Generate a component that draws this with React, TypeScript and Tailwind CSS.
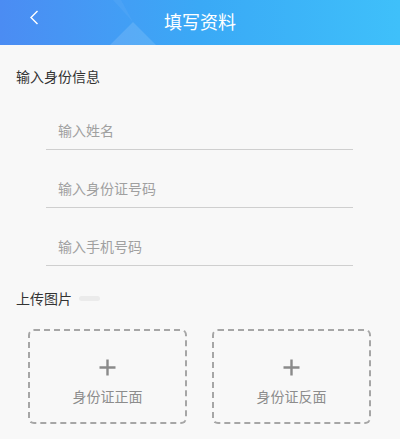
import React from "react";

const font = { fontFamily: '"Noto Sans CJK SC", "Noto Sans", sans-serif' };

function Field({ placeholder }: { placeholder: string }) {
  return (
    <div className="ml-[46px] w-[307px] h-[58px] border-b border-[#cfcfcf] flex items-end pb-[9px] pl-[12px]">
      <span className="text-[14px] leading-[20px] text-[#a0a0a0]">{placeholder}</span>
    </div>
  );
}

function UploadBox({ label }: { label: string }) {
  return (
    <div className="w-[159px] h-[95px] rounded-[6px] border-2 border-dashed border-[#a6a6a6] flex flex-col items-center pt-[28px]">
      <svg width="17" height="17" viewBox="0 0 17 17">
        <path d="M8.5 0.5V16.5M0.5 8.5H16.5" stroke="#8a8a8a" strokeWidth="2.4" />
      </svg>
      <span className="mt-[10px] text-[14px] leading-[20px] text-[#8c8c8c]">{label}</span>
    </div>
  );
}

export default function App() {
  return (
    <div className="w-[400px] h-[439px] bg-[#f8f8f8] overflow-hidden" style={font}>
      <div className="relative h-[45px] bg-gradient-to-r from-[#4b8cf3] via-[#3aa9f6] to-[#3fc0fa] flex items-center justify-center">
        <svg className="absolute left-0 top-0" width="400" height="45" viewBox="0 0 400 45">
          <polygon points="133,22 110,45 156,45" fill="#ffffff" fillOpacity="0.13" />
          <polygon points="113,0 121,0 133,22" fill="#ffffff" fillOpacity="0.05" />
        </svg>
        <svg className="absolute left-[29px] top-[10px]" width="10" height="15" viewBox="0 0 10 15">
          <path d="M8.5 1L2 7.5L8.5 14" stroke="#ffffff" strokeWidth="1.4" fill="none" />
        </svg>
        <span className="relative text-white text-[18px] leading-[24px] -mt-[3px]">填写资料</span>
      </div>
      <div className="pt-[21px] pl-[16px] text-[14px] leading-[20px] text-[#333333]">输入身份信息</div>
      <div className="mt-[6px] flex flex-col">
        <Field placeholder="输入姓名" />
        <Field placeholder="输入身份证号码" />
        <Field placeholder="输入手机号码" />
      </div>
      <div className="mt-[22px] pl-[16px] flex items-center">
        <span className="text-[14px] leading-[20px] text-[#333333]">上传图片</span>
        <span className="ml-[7px] w-[21px] h-[5px] rounded-full bg-[#ebebeb]" />
      </div>
      <div className="mt-[21px] pl-[28px] flex gap-[25px]">
        <UploadBox label="身份证正面" />
        <UploadBox label="身份证反面" />
      </div>
    </div>
  );
}
